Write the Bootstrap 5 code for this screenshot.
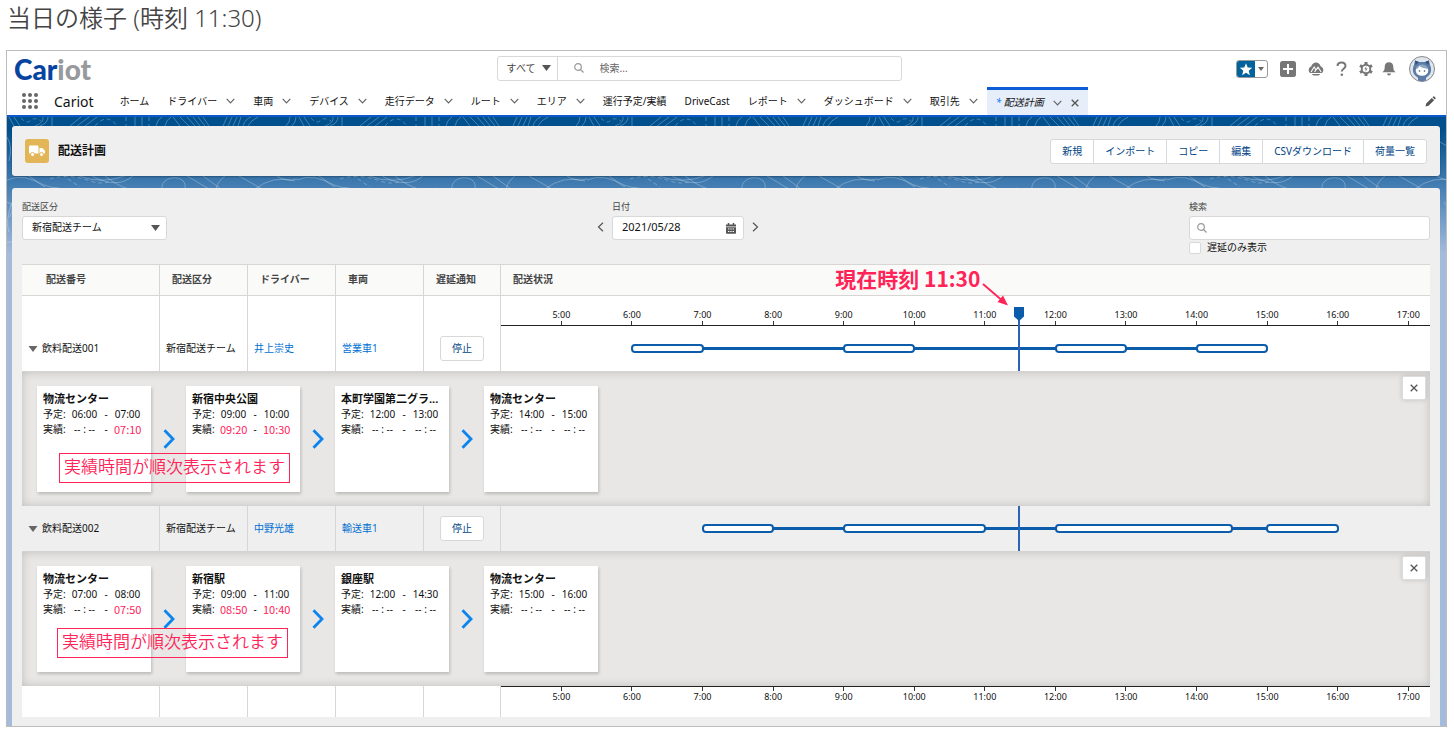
<!DOCTYPE html>
<html lang="ja">
<head>
<meta charset="utf-8">
<meta name="viewport" content="width=device-width, initial-scale=1">
<title>配送計画 | Cariot</title>
<link href="https://cdn.jsdelivr.net/npm/bootstrap@5.3.0/dist/css/bootstrap.min.css" rel="stylesheet">
<style>
  :root { --ink:#111; --edge:#d8d6d4; --link:#0070d2; --brand:#0b5cab; --note:#ff2358; }
  body { font-family:"Noto Sans","Noto Sans CJK JP",sans-serif; font-size:10px; line-height:15px; color:var(--ink); background:#fff; padding:0 7px 7px 6px; }
  a { text-decoration:none; }
  .page-title { font-weight:350; font-size:24px; line-height:36px; height:50px; color:#444; padding-left:1px; margin:0; }
  .app-frame { border:1px solid #bcbcbc; }
  .ico { display:block; flex:none; }

  /* global header */
  .top-bar { height:36px; padding:0 11px 0 7px; }
  .side-start { flex:19 1 0; }
  .side-end { flex:21 1 0; }
  .logo { font-family:Lato,sans-serif; font-weight:900; font-size:28px; line-height:36px; color:#0744a0; }
  .logo span { color:#97999c; }
  .global-search { width:405px; height:25px; border:1px solid #d8d8d8; border-radius:3px; margin-top:-2px; }
  .plain-field { appearance:none; border:0; background-color:transparent; font-size:10px; line-height:15px; padding:0; border-radius:0; box-shadow:none; color:#444; }
  .plain-field::placeholder { color:#666; }
  .caret-select { appearance:none; background-image:url("data:image/svg+xml,%3Csvg xmlns='http://www.w3.org/2000/svg' width='9' height='6'%3E%3Cpath d='M0 0h9L4.500 6z' fill='%23555'/%3E%3C/svg%3E"); background-size:9px 6px; background-repeat:no-repeat; background-position:right 6px center; }
  .scope { width:60px; padding-left:9px; border-right:1px solid #d8d8d8; height:23px; }
  .icon-btn { border:0; background:none; padding:0; color:#777; display:block; }
  .fav { border:1px solid #999; border-radius:3px; overflow:hidden; height:18px; width:32px; }
  .fav .star { background:#01639b; width:18px; height:18px; flex:none; }
  .fav .more { padding:0 3px; }

  /* navigation */
  .nav-bar { height:28px; padding-left:15px; padding-right:10px; }
  .nav-bar a { color:var(--ink); }
  .app-name { font-size:14px; margin:0 17px 0 16px; }
  .tab-item { padding:0 9px; height:28px; gap:9px; }
  .tab-item.current { border-top:3px solid #0b5cd5; background:#e6eefa; font-style:italic; height:28px; }
  .accent { height:2px; background:#0b58c8; }

  /* work area */
  .canvas-area { position:relative; background:linear-gradient(#00508e 0,#00508e 12px,#3d79af 64px,#a4bbdb 136px); padding:9px 6px 0 5px; overflow:hidden; }
  .topo { position:absolute; left:0; top:0; width:100%; height:150px; }
  .panel { position:relative; background:#efefef; border-radius:3px; }
  .head-panel { height:50px; padding:0 13px; margin-bottom:12px; box-shadow:0 1px 2px rgba(0,0,0,.3); }
  .truck { width:24px; height:24px; border-radius:3px; background:#e2b557; }
  .head-panel h1 { font-size:12px; line-height:18px; font-weight:700; margin:0 0 0 9px; }
  .act { --bs-btn-font-size:10px; --bs-btn-padding-x:11px; --bs-btn-padding-y:4px; --bs-btn-line-height:15px; --bs-btn-color:#014486; --bs-btn-bg:#fff; --bs-btn-border-color:#d8d8d8; --bs-btn-border-radius:3px; --bs-btn-hover-color:#014486; --bs-btn-hover-bg:#f4f6f9; --bs-btn-hover-border-color:#d8d8d8; }
  .body-panel { padding:12px 10px 9px; border-radius:3px 3px 0 0; }

  /* filters */
  .filters { height:64px; }
  .filters .cap { display:block; font-size:9px; line-height:14px; margin-bottom:2px; color:#444; }
  .box-field { display:block; width:100%; height:24px; font-size:10px; line-height:15px; border:1px solid #d8d8d8; border-radius:3px; background-color:#fff; color:var(--ink); padding:0 9px 1px; }
  .box-field.date { font-size:11px; padding-bottom:3px; }
  .inner-icon { position:absolute; top:7px; }
  .delay-check { width:12px; height:12px; margin:0; border:1px solid #d8d8d8; border-radius:2px; appearance:none; background:#fff; }

  /* schedule */
  .plan { table-layout:fixed; width:100%; border-collapse:separate; border-spacing:0; border-top:1px solid var(--edge); }
  .plan th { height:31px; background:#fafaf9; color:#444; font-weight:700; padding:0 12px 2px; border-bottom:1px solid var(--edge); }
  .plan th:first-child { padding-left:24px; }
  .plan th, .plan td { border-right:1px solid var(--edge); }
  .plan th:last-child, .plan td:last-child { border-right:0; }
  .plan td { padding:0; vertical-align:bottom; }
  .plan a { color:var(--link); }
  .lane-cell { height:45px; padding-left:6px; }
  .row-white td { background:#fff; }
  .row-foot td { height:31px; vertical-align:top; }
  .axis { height:30px; overflow:hidden; border-bottom:1px solid #222; padding-left:2.7%; }
  .axis span { flex:0 0 calc(100% / 12.805); text-align:center; font-size:9px; line-height:10px; display:flex; flex-direction:column; justify-content:flex-end; align-items:center; gap:1px; }
  .axis span::after { content:""; width:1px; height:4px; background:#333; }
  .axis.foot { border-bottom:0; border-top:1px solid #222; }
  .axis.foot span { flex-direction:column-reverse; }
  .lane { height:45px; }
  .seg { flex:none; width:calc(var(--h) * 100% / 13.159); }
  .seg.move { height:3px; background:var(--brand); }
  .seg.stop { height:9px; border:2px solid var(--brand); border-radius:4px; background:#fff; width:calc(var(--h) * 100% / 13.159 + 2px); margin:0 -1px; }
  .now { position:absolute; top:0; bottom:0; left:calc((var(--t) - 4.143) * 100% / 13.159 - 2px); width:2px; background:#2a63b8; }
  .now.flagged { top:11px; }
  .now .flag { position:absolute; left:-4px; top:0; }
  .now-note { position:absolute; right:40px; top:-44px; white-space:nowrap; font-family:"Noto Sans CJK JP",sans-serif; font-weight:700; font-size:21px; line-height:30px; color:var(--note); }
  .now-arrow { position:absolute; right:12px; top:-24px; }

  .detail { position:relative; height:135px; padding:14px 4px 0 15px; background:#e8e7e5; border-top:1px solid #d4d3d1; box-shadow:inset 0 0 10px rgba(0,0,0,.18); }
  .visit { width:114px; height:106px; background:#fff; padding:5px 6px; box-shadow:1px 2px 3px rgba(0,0,0,.2); }
  .visit h2 { font-size:11px; line-height:16px; font-weight:700; margin:0; white-space:nowrap; }
  .times { display:grid; grid-template-columns:28px 27px 1fr 27px; padding-right:4px; text-align:center; line-height:15px; white-space:nowrap; }
  .times > :first-child { text-align:left; }
  .times .hit { font-family:"Noto Sans CJK JP",sans-serif; font-size:11px; color:var(--note); }
  .step { width:35px; height:106px; }
  .close-btn { width:24px; height:24px; background:#fff; border:1px solid #ddd; border-radius:2px; box-shadow:0 0 5px rgba(0,0,0,.16); margin-top:-10px; }
  .callout { position:absolute; left:37px; top:81px; border:1px solid var(--note); color:var(--note); font-family:"Noto Sans CJK JP",sans-serif; font-weight:350; font-size:17px; line-height:24px; padding:0 4px 4px; white-space:nowrap; }
  .callout.second { left:35px; top:76px; }
</style>
</head>
<body>
<svg width="0" height="0" class="position-absolute" aria-hidden="true">
  <symbol id="chev" viewBox="0 0 9 6"><path d="M.7.8 4.500 4.800 8.300.8" fill="none" stroke="#666" stroke-width="1.200"/></symbol>
  <symbol id="lens" viewBox="0 0 10 10"><circle cx="4" cy="4" r="3.300" fill="none" stroke="#999" stroke-width="1.200"/><path d="M6.500 6.500 9.500 9.500" stroke="#999" stroke-width="1.300"/></symbol>
  <symbol id="cross" viewBox="0 0 8 8"><path d="M.7.7l6.600 6.600M7.300.7.7 7.300" stroke="#555" stroke-width="1.300"/></symbol>
  <symbol id="tri" viewBox="0 0 9 6"><path d="M0 0h9L4.500 6z" fill="#666"/></symbol>
  <symbol id="next" viewBox="0 0 12 20"><path d="M1.500 1.200 10 10 1.500 18.800" fill="none" stroke="#0b84ee" stroke-width="2.800"/></symbol>
</svg>

<p class="page-title">当日の様子 (時刻 11:30)</p>

<div class="app-frame">
  <header class="top-bar d-flex align-items-center">
    <div class="logo side-start">Car<span>iot</span></div>
    <form class="global-search d-flex align-items-center flex-shrink-0">
      <select class="plain-field caret-select scope" aria-label="検索対象"><option>すべて</option></select>
      <svg class="ico mx-3" width="10" height="10"><use href="#lens"/></svg>
      <input class="plain-field flex-fill" type="search" placeholder="検索..." aria-label="検索">
    </form>
    <div class="side-end d-flex align-items-center justify-content-end">
      <div class="fav d-flex align-items-center me-2">
        <button class="icon-btn star" aria-label="お気に入り"><svg class="ico" width="18" height="17" viewBox="0 0 18 17"><path d="M9 2.200l1.700 4.300 4.500.3-3.500 2.900 1.200 4.500L9 11.700l-3.900 2.500 1.200-4.500-3.500-2.900 4.500-.3z" fill="#fff"/></svg></button>
        <button class="icon-btn more" aria-label="お気に入り一覧"><svg class="ico" width="6" height="4" viewBox="0 0 9 6"><use href="#tri"/></svg></button>
      </div>
      <button class="icon-btn ms-1" aria-label="追加"><svg class="ico" width="16" height="16" viewBox="0 0 16 16"><rect width="16" height="16" rx="2.500" fill="#777"/><path d="M8 3v10M3 8h10" stroke="#fff" stroke-width="2"/></svg></button>
      <button class="icon-btn ms-2 ps-1" aria-label="学習"><svg class="ico" width="16" height="16" viewBox="0 0 16 16"><path d="M2.300 12C-.6 10.500.8 6.200 3.200 5.600 4 2.600 6.200 1.500 8 1.500s4 1.200 4.800 4.100c2.400.6 3.800 4.900.9 6.400z" fill="#777"/><path d="M3 11 6.200 6l2 3.200M6.500 11l3.500-4.800 3.200 4.800" fill="none" stroke="#fff" stroke-width="1.100"/><path d="M3.500 13h9l-2 1.500h-5z" fill="#777"/></svg></button>
      <button class="icon-btn ms-2 ps-1" aria-label="ヘルプ"><svg class="ico" width="11" height="16" viewBox="0 0 11 16"><path d="M1.500 5C1.500 2.600 3.300 1.500 5.500 1.500S9.500 2.800 9.500 5c0 2.600-3.700 2.800-3.700 5.500" fill="none" stroke="#777" stroke-width="2"/><circle cx="5.800" cy="13.700" r="1.300" fill="#777"/></svg></button>
      <button class="icon-btn ms-2 ps-1" aria-label="設定"><svg class="ico" width="14" height="16" viewBox="0 0 14 16"><g stroke="#777" stroke-width="3"><path d="M7 1v14M1 4.500l12 7M13 4.500l-12 7"/></g><circle cx="7" cy="8" r="5.200" fill="#777"/><circle cx="7" cy="8" r="3.300" fill="#fff"/><path d="M7.400 5.300 5.300 8.300h1.500l-.4 2.500 2.200-3.300H7z" fill="#777"/></svg></button>
      <button class="icon-btn ms-2" aria-label="通知"><svg class="ico" width="16" height="16" viewBox="0 0 16 16"><path d="M8 1.200c-2.800 0-4.300 2-4.300 4.500 0 3-.7 4.200-2.400 5.500h13.400c-1.700-1.300-2.400-2.500-2.400-5.500C12.300 3.200 10.800 1.200 8 1.200z" fill="#777"/><path d="M6 12.500h4a2 2 0 0 1-4 0z" fill="#777"/></svg></button>
      <button class="icon-btn ms-2 ps-1" aria-label="プロフィール"><svg class="ico" width="26" height="26" viewBox="0 0 26 26"><circle cx="13" cy="13" r="12.500" fill="#dfe6ee" stroke="#888"/><path d="M6 4.500l4 1.500h6l4-1.500 1 4.500c2 4 1.500 9-3 12-1 .6-1 1-1 1.500v2q-4 1.500-8 0v-2c0-.5 0-.9-1-1.500C3.500 18 3 13 5 9z" fill="#5c7ca6"/><path d="M6 4.500 10 6 6.500 9zM20 4.500 16 6l3.500 3z" fill="#30507e"/><ellipse cx="13" cy="14.500" rx="6.300" ry="5.300" fill="#fff"/><path d="M7 13c2-.2 2.500-1.500 3.500-3 2 2 5.500 2.500 8.500 3-1-3.500-4-4.500-6-4.500S7.500 9.500 7 13z" fill="#8ea6c6"/><circle cx="10.500" cy="15" r=".8" fill="#30507e"/><circle cx="15.500" cy="15" r=".8" fill="#30507e"/></svg></button>
    </div>
  </header>

  <nav class="nav-bar d-flex align-items-center" aria-label="メイン">
    <button class="icon-btn" aria-label="アプリ一覧"><svg class="ico" width="16" height="16" viewBox="0 0 16 16" fill="#666"><circle cx="2" cy="2" r="2"/><circle cx="8" cy="2" r="2"/><circle cx="14" cy="2" r="2"/><circle cx="2" cy="8" r="2"/><circle cx="8" cy="8" r="2"/><circle cx="14" cy="8" r="2"/><circle cx="2" cy="14" r="2"/><circle cx="8" cy="14" r="2"/><circle cx="14" cy="14" r="2"/></svg></button>
    <span class="app-name">Cariot</span>
    <a href="#" class="tab-item d-flex align-items-center">ホーム</a>
    <a href="#" class="tab-item d-flex align-items-center">ドライバー<svg class="ico" width="9" height="6"><use href="#chev"/></svg></a>
    <a href="#" class="tab-item d-flex align-items-center">車両<svg class="ico" width="9" height="6"><use href="#chev"/></svg></a>
    <a href="#" class="tab-item d-flex align-items-center">デバイス<svg class="ico" width="9" height="6"><use href="#chev"/></svg></a>
    <a href="#" class="tab-item d-flex align-items-center">走行データ<svg class="ico" width="9" height="6"><use href="#chev"/></svg></a>
    <a href="#" class="tab-item d-flex align-items-center">ルート<svg class="ico" width="9" height="6"><use href="#chev"/></svg></a>
    <a href="#" class="tab-item d-flex align-items-center">エリア<svg class="ico" width="9" height="6"><use href="#chev"/></svg></a>
    <a href="#" class="tab-item d-flex align-items-center">運行予定/実績</a>
    <a href="#" class="tab-item d-flex align-items-center">DriveCast</a>
    <a href="#" class="tab-item d-flex align-items-center">レポート<svg class="ico" width="9" height="6"><use href="#chev"/></svg></a>
    <a href="#" class="tab-item d-flex align-items-center">ダッシュボード<svg class="ico" width="9" height="6"><use href="#chev"/></svg></a>
    <a href="#" class="tab-item d-flex align-items-center">取引先<svg class="ico" width="9" height="6"><use href="#chev"/></svg></a>
    <a href="#" class="tab-item current d-flex align-items-center" aria-current="page"><span><span class="text-primary">*</span> 配送計画</span><svg class="ico" width="9" height="6"><use href="#chev"/></svg><svg class="ico" width="8" height="8"><use href="#cross"/></svg></a>
    <button class="icon-btn ms-auto" aria-label="編集"><svg class="ico" width="11" height="11" viewBox="0 0 11 11" fill="#555"><path d="M.5 10.500 1.200 7.500 6.800 1.900 9.100 4.200 3.500 9.800zM7.500 1.200 8.300.5q.6-.4 1 0l1.200 1.200q.4.500 0 1l-.8.8z"/></svg></button>
  </nav>
  <div class="accent"></div>

  <main class="canvas-area">
    <svg class="topo" aria-hidden="true">
      <defs><pattern id="contours" width="290" height="150" patternUnits="userSpaceOnUse">
        <g fill="none" stroke="#fff" stroke-opacity=".27" stroke-width="1">
          <path d="M2 0 7 9M7 0l6 9M28 9Q37 6 36 0M33 9q8-3 8-9M45 0v9M63 9 74 0M70 9 82 0M78 9 90 0M128 0v9M135 0v9M149 9q1-6 6-9M158 9q1-6 6-9M166 0l7 9M173 0l9 9M180 0l8 9M186 0l7 9M191 0l7 9M196 0l6 9M216 9l4-9M221 9l4-9M226 9l4-9M231 9l3-9M236 9q2-7 8-9M241 9q3-6 10-9M279 9q4-4 4-9M285 9q4-4 4-9"/>
          <path stroke-dasharray="4 3" d="M14 1q6 7 10 2 4-3 10 1M88 9Q100-5 110 9M119 0v9M142 0v9M43 62q18-6 40 2 12 4 22 0M55 58l18 12"/>
          <path d="M0 63q18-8 38 7M22 59q15 12 30 12M72 59q24 9 48-1M85 59q26 14 42-1M98 59q26 20 42 12M155 72c-2-14 26-16 23 0M180 59l22 13M196 59l18 13M209 72q2-8 9-13M232 59l23 13M248 72q18-14 40-8M270 59q8 6 20 3"/>
          <path d="M0 85q9 2 3 15M5 85q-7 20-3 30M0 125h12M273 25q14 9 17 5M277 85q12 14 7 30M288 88q-12 10-2 32M0 20q6 10 2 24"/>
        </g></pattern></defs>
      <rect width="100%" height="150" fill="url(#contours)"/>
    </svg>

    <section class="panel head-panel d-flex align-items-center">
      <div class="truck d-flex align-items-center justify-content-center"><svg class="ico" width="16" height="12" viewBox="0 0 16 12"><path d="M0 1.500Q0 .5 1 .5h7.500q1 0 1 1V8.500H0zM10.500 3h2.700L16 5.800v2.700h-5.500z" fill="#fff"/><circle cx="3.500" cy="9.500" r="2" fill="#fff" stroke="#e2b557"/><circle cx="12.500" cy="9.500" r="2" fill="#fff" stroke="#e2b557"/></svg></div>
      <h1>配送計画</h1>
      <div class="btn-group ms-auto" role="group">
        <button class="btn act">新規</button><button class="btn act">インポート</button><button class="btn act">コピー</button><button class="btn act">編集</button><button class="btn act">CSVダウンロード</button><button class="btn act">荷量一覧</button>
      </div>
    </section>

    <section class="panel body-panel">
      <form class="filters d-flex justify-content-between align-items-start">
        <div style="width:145px">
          <label class="cap" for="team">配送区分</label>
          <select id="team" class="box-field caret-select"><option>新宿配送チーム</option></select>
        </div>
        <div class="d-flex align-items-end">
          <button type="button" class="icon-btn pb-2 pe-2" aria-label="前日"><svg class="ico" width="7" height="10" viewBox="0 0 7 10"><path d="M6 .7 1.500 5 6 9.300" fill="none" stroke="#555" stroke-width="1.200"/></svg></button>
          <div style="width:132px">
            <label class="cap" for="day">日付</label>
            <div class="position-relative">
              <input id="day" class="box-field date" type="text" value="2021/05/28">
              <svg class="inner-icon end-0 me-2" width="10" height="11" viewBox="0 0 10 11"><path d="M2.500 0v2.500M7.500 0v2.500" stroke="#555" stroke-width="1.500"/><path d="M0 1.500h10v2H0zM0 4.200h10V10q0 .8-.8.8H.8Q0 10.800 0 10z" fill="#555"/><path d="M2 6h6M2 8.500h6" stroke="#fff" stroke-width="1.200" stroke-dasharray="1.400 .9"/></svg>
            </div>
          </div>
          <button type="button" class="icon-btn pb-2 ps-2" aria-label="翌日"><svg class="ico" width="7" height="10" viewBox="0 0 7 10"><path d="M1 .7 5.500 5 1 9.300" fill="none" stroke="#555" stroke-width="1.200"/></svg></button>
        </div>
        <div style="width:241px">
          <label class="cap" for="find">検索</label>
          <div class="position-relative">
            <input id="find" class="box-field ps-4" type="search">
            <svg class="inner-icon start-0 ms-2" width="10" height="10"><use href="#lens"/></svg>
          </div>
          <div class="d-flex align-items-center">
            <input id="late" class="delay-check" type="checkbox"><label for="late" style="margin-left:6px">遅延のみ表示</label>
          </div>
        </div>
      </form>

      <table class="plan">
        <colgroup><col style="width:138px"><col style="width:88px"><col style="width:88px"><col style="width:88px"><col style="width:77px"><col></colgroup>
        <thead><tr><th>配送番号</th><th>配送区分</th><th>ドライバー</th><th>車両</th><th>遅延通知</th><th>配送状況</th></tr></thead>
        <tbody>
          <tr class="row-white">
            <td><div class="lane-cell d-flex align-items-center"><svg class="ico me-1" width="10" height="6"><use href="#tri"/></svg>飲料配送001</div></td>
            <td><div class="lane-cell d-flex align-items-center">新宿配送チーム</div></td>
            <td><div class="lane-cell d-flex align-items-center"><a href="#">井上崇史</a></div></td>
            <td><div class="lane-cell d-flex align-items-center"><a href="#">営業車1</a></div></td>
            <td><div class="lane-cell ps-0 d-flex align-items-center justify-content-center"><button class="btn act">停止</button></div></td>
            <td><div class="position-relative">
              <div class="axis d-flex"><span>5:00</span><span>6:00</span><span>7:00</span><span>8:00</span><span>9:00</span><span>10:00</span><span>11:00</span><span>12:00</span><span>13:00</span><span>14:00</span><span>15:00</span><span>16:00</span><span>17:00</span></div>
              <div class="lane d-flex align-items-center">
                <div class="seg" style="--h:1.857"></div><div class="seg stop" style="--h:1"></div><div class="seg move" style="--h:2"></div><div class="seg stop" style="--h:1"></div><div class="seg move" style="--h:2"></div><div class="seg stop" style="--h:1"></div><div class="seg move" style="--h:1"></div><div class="seg stop" style="--h:1"></div>
              </div>
              <div class="now flagged" style="--t:11.5">
                <svg class="flag" width="10" height="14" viewBox="0 0 10 14"><path d="M0 0h10v9.500L5 14 0 9.500z" fill="#0b5cab"/></svg>
                <span class="now-note">現在時刻 11:30</span>
                <svg class="now-arrow" width="26" height="23" viewBox="0 0 26 23"><path d="M1 1 19 16.500" stroke="#ff2358" stroke-width="1.800"/><path d="M26 22.500 15.500 19 21 12.500z" fill="#ff2358"/></svg>
              </div>
            </div></td>
          </tr>
          <tr><td colspan="6"><div class="detail d-flex">
            <article class="visit"><h2>物流センター</h2><div class="times"><span>予定:</span><span>06:00</span><span>-</span><span>07:00</span></div><div class="times"><span>実績:</span><span>-- : --</span><span>-</span><span class="hit">07:10</span></div></article>
            <div class="step d-flex align-items-center justify-content-center"><svg class="ico" width="12" height="20"><use href="#next"/></svg></div>
            <article class="visit"><h2>新宿中央公園</h2><div class="times"><span>予定:</span><span>09:00</span><span>-</span><span>10:00</span></div><div class="times"><span>実績:</span><span class="hit">09:20</span><span>-</span><span class="hit">10:30</span></div></article>
            <div class="step d-flex align-items-center justify-content-center"><svg class="ico" width="12" height="20"><use href="#next"/></svg></div>
            <article class="visit"><h2>本町学園第二グラ...</h2><div class="times"><span>予定:</span><span>12:00</span><span>-</span><span>13:00</span></div><div class="times"><span>実績:</span><span>-- : --</span><span>-</span><span>-- : --</span></div></article>
            <div class="step d-flex align-items-center justify-content-center"><svg class="ico" width="12" height="20"><use href="#next"/></svg></div>
            <article class="visit"><h2>物流センター</h2><div class="times"><span>予定:</span><span>14:00</span><span>-</span><span>15:00</span></div><div class="times"><span>実績:</span><span>-- : --</span><span>-</span><span>-- : --</span></div></article>
            <button class="close-btn ms-auto p-0 d-flex align-items-center justify-content-center" aria-label="閉じる"><svg class="ico" width="8" height="8"><use href="#cross"/></svg></button>
            <div class="callout">実績時間が順次表示されます</div>
          </div></td></tr>
          <tr>
            <td><div class="lane-cell d-flex align-items-center"><svg class="ico me-1" width="10" height="6"><use href="#tri"/></svg>飲料配送002</div></td>
            <td><div class="lane-cell d-flex align-items-center">新宿配送チーム</div></td>
            <td><div class="lane-cell d-flex align-items-center"><a href="#">中野光雄</a></div></td>
            <td><div class="lane-cell d-flex align-items-center"><a href="#">輸送車1</a></div></td>
            <td><div class="lane-cell ps-0 d-flex align-items-center justify-content-center"><button class="btn act">停止</button></div></td>
            <td><div class="position-relative">
              <div class="lane d-flex align-items-center">
                <div class="seg" style="--h:2.857"></div><div class="seg stop" style="--h:1"></div><div class="seg move" style="--h:1"></div><div class="seg stop" style="--h:2"></div><div class="seg move" style="--h:1"></div><div class="seg stop" style="--h:2.5"></div><div class="seg move" style="--h:.5"></div><div class="seg stop" style="--h:1"></div>
              </div>
              <div class="now" style="--t:11.5"></div>
            </div></td>
          </tr>
          <tr><td colspan="6"><div class="detail d-flex">
            <article class="visit"><h2>物流センター</h2><div class="times"><span>予定:</span><span>07:00</span><span>-</span><span>08:00</span></div><div class="times"><span>実績:</span><span>-- : --</span><span>-</span><span class="hit">07:50</span></div></article>
            <div class="step d-flex align-items-center justify-content-center"><svg class="ico" width="12" height="20"><use href="#next"/></svg></div>
            <article class="visit"><h2>新宿駅</h2><div class="times"><span>予定:</span><span>09:00</span><span>-</span><span>11:00</span></div><div class="times"><span>実績:</span><span class="hit">08:50</span><span>-</span><span class="hit">10:40</span></div></article>
            <div class="step d-flex align-items-center justify-content-center"><svg class="ico" width="12" height="20"><use href="#next"/></svg></div>
            <article class="visit"><h2>銀座駅</h2><div class="times"><span>予定:</span><span>12:00</span><span>-</span><span>14:30</span></div><div class="times"><span>実績:</span><span>-- : --</span><span>-</span><span>-- : --</span></div></article>
            <div class="step d-flex align-items-center justify-content-center"><svg class="ico" width="12" height="20"><use href="#next"/></svg></div>
            <article class="visit"><h2>物流センター</h2><div class="times"><span>予定:</span><span>15:00</span><span>-</span><span>16:00</span></div><div class="times"><span>実績:</span><span>-- : --</span><span>-</span><span>-- : --</span></div></article>
            <button class="close-btn ms-auto p-0 d-flex align-items-center justify-content-center" aria-label="閉じる"><svg class="ico" width="8" height="8"><use href="#cross"/></svg></button>
            <div class="callout second">実績時間が順次表示されます</div>
          </div></td></tr>
          <tr class="row-white row-foot"><td></td><td></td><td></td><td></td><td></td>
            <td><div class="axis foot d-flex"><span>5:00</span><span>6:00</span><span>7:00</span><span>8:00</span><span>9:00</span><span>10:00</span><span>11:00</span><span>12:00</span><span>13:00</span><span>14:00</span><span>15:00</span><span>16:00</span><span>17:00</span></div></td></tr>
        </tbody>
      </table>
    </section>
  </main>
</div>
<script src="https://cdn.jsdelivr.net/npm/bootstrap@5.3.0/dist/js/bootstrap.bundle.min.js"></script>
</body>
</html>
